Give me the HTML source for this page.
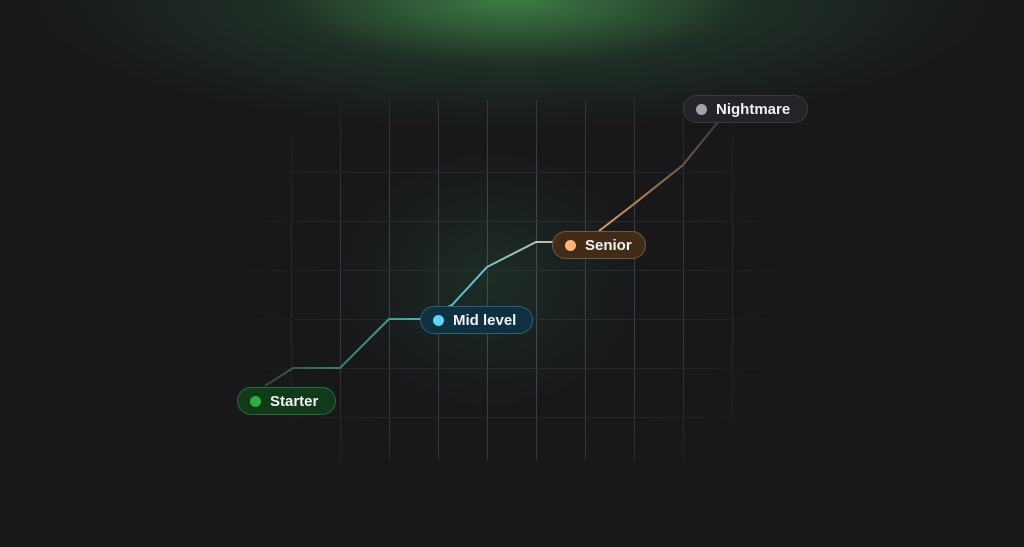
<!DOCTYPE html>
<html><head><style>
html,body{margin:0;padding:0;}
body{width:1024px;height:547px;background:#18181b;position:relative;overflow:hidden;font-family:"Liberation Sans",sans-serif;}
.glow{position:absolute;left:0;top:0;width:1024px;height:547px;background:radial-gradient(ellipse 480px 130px at 512px 0px,rgba(70,150,80,0.8),rgba(40,80,50,0.4) 50%,rgba(24,24,27,0) 100%);}
.glow2{position:absolute;left:0;top:0;width:1024px;height:547px;background:radial-gradient(ellipse 150px 130px at 490px 280px,rgba(40,90,60,0.3),rgba(24,24,27,0) 100%);}
.pill{position:absolute;height:28px;border-radius:14px;box-sizing:border-box;color:#f2f2f2;font-size:15px;font-weight:bold;line-height:27px;padding-left:32px;}
.pill i{position:absolute;left:12px;top:8px;width:11px;height:11px;border-radius:50%;}
</style></head><body>
<div class="glow"></div><div class="glow2"></div>
<svg width="1024" height="547" style="position:absolute;left:0;top:0">
<defs>
<radialGradient id="fade" cx="512" cy="280" r="280" gradientUnits="userSpaceOnUse">
<stop offset="0" stop-color="#fff" stop-opacity="1"/><stop offset="0.65" stop-color="#fff" stop-opacity="0.6"/><stop offset="1" stop-color="#fff" stop-opacity="0"/></radialGradient>
<mask id="m"><rect x="0" y="0" width="1024" height="547" fill="url(#fade)"/></mask>
<linearGradient id="lg" x1="265" y1="0" x2="722" y2="0" gradientUnits="userSpaceOnUse">
<stop offset="0" stop-color="#2f4a3c"/><stop offset="0.2" stop-color="#3e8a78"/><stop offset="0.45" stop-color="#5bc6d8"/><stop offset="0.6" stop-color="#bdbfa8"/><stop offset="0.75" stop-color="#d99a5c"/><stop offset="1" stop-color="#3a3a3a"/></linearGradient>
</defs>
<g mask="url(#m)" stroke-width="1">
<g stroke="#4a4c52">
<line x1="291.5" y1="100" x2="291.5" y2="460"/><line x1="340.5" y1="100" x2="340.5" y2="460"/><line x1="389.5" y1="100" x2="389.5" y2="460"/><line x1="438.5" y1="100" x2="438.5" y2="460"/><line x1="487.5" y1="100" x2="487.5" y2="460"/><line x1="536.5" y1="100" x2="536.5" y2="460"/><line x1="585.5" y1="100" x2="585.5" y2="460"/><line x1="634.5" y1="100" x2="634.5" y2="460"/><line x1="683.5" y1="100" x2="683.5" y2="460"/><line x1="732.5" y1="100" x2="732.5" y2="460"/>
</g>
<g stroke="#2a3438">
<line x1="240" y1="172.5" x2="780" y2="172.5"/><line x1="240" y1="221.5" x2="780" y2="221.5"/><line x1="240" y1="270.5" x2="780" y2="270.5"/><line x1="240" y1="319.5" x2="780" y2="319.5"/><line x1="240" y1="368.5" x2="780" y2="368.5"/><line x1="240" y1="417.5" x2="780" y2="417.5"/>
</g>
</g>
<polyline fill="none" stroke="url(#lg)" stroke-width="2" points="265,386 293,368 340,368 389,319 420,319 452,305 487,267 536,242 553,242"/>
<polyline fill="none" stroke="url(#lg)" stroke-width="2" points="599,231 634,204 683,165 722,117"/>
</svg>
<div class="pill" style="left:237px;top:387px;width:99px;background:#103a1a;border:1px solid #2a6a3c;"><i style="background:#2fae3e"></i>Starter</div>
<div class="pill" style="left:420px;top:306px;width:113px;background:#0f3040;border:1px solid #2d6074;"><i style="background:#5ed3f5"></i>Mid level</div>
<div class="pill" style="left:552px;top:231px;width:94px;background:#432c17;border:1px solid #6a5a44;"><i style="background:#ffb47a"></i>Senior</div>
<div class="pill" style="left:683px;top:95px;width:125px;background:#232328;border:1px solid #3a3a40;"><i style="background:#a3a3ad"></i>Nightmare</div>
</body></html>
